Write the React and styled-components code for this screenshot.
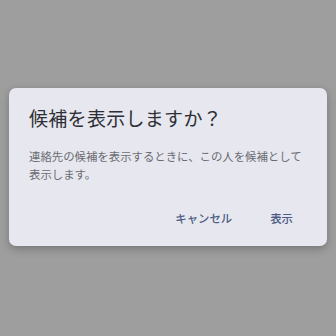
import React from "react";
import styled, { createGlobalStyle } from "styled-components";

const Global = createGlobalStyle`
  html, body { margin: 0; padding: 0; }
  body {
    width: 336px;
    height: 336px;
    background: #9e9e9f;
    font-family: "Noto Sans CJK JP", "Noto Sans", sans-serif;
    overflow: hidden;
  }
`;

const Screen = styled.div`
  width: 336px;
  height: 336px;
  padding: 88px 9px 0;
  box-sizing: border-box;
`;

const Dialog = styled.div`
  width: 318px;
  height: 158px;
  box-sizing: border-box;
  background: #e6e7ef;
  border-radius: 7px;
  box-shadow: 0 3px 8px rgba(0, 0, 0, 0.25);
  padding: 16px 0 10px 20px;
  display: flex;
  flex-direction: column;
`;

const Title = styled.div`
  font-size: 19px;
  line-height: 28px;
  color: #2e2f34;
  letter-spacing: 0.3px;
`;

const Body = styled.div`
  margin-top: 15px;
  padding-right: 20px;
  font-size: 11.4px;
  line-height: 18px;
  color: #6b6c72;
`;

const Actions = styled.div`
  margin-top: auto;
  display: flex;
  justify-content: flex-end;
  gap: 14px;
  padding-right: 22px;
`;

const Button = styled.button`
  border: none;
  background: transparent;
  height: 36px;
  padding: 0 12px;
  font-family: inherit;
  font-size: 11.4px;
  font-weight: 500;
  color: #4d5b84;
`;

export default function App() {
  return (
    <>
      <Global />
      <Screen>
        <Dialog>
          <Title>候補を表示しますか？</Title>
          <Body>連絡先の候補を表示するときに、この人を候補として表示します。</Body>
          <Actions>
            <Button>キャンセル</Button>
            <Button>表示</Button>
          </Actions>
        </Dialog>
      </Screen>
    </>
  );
}
